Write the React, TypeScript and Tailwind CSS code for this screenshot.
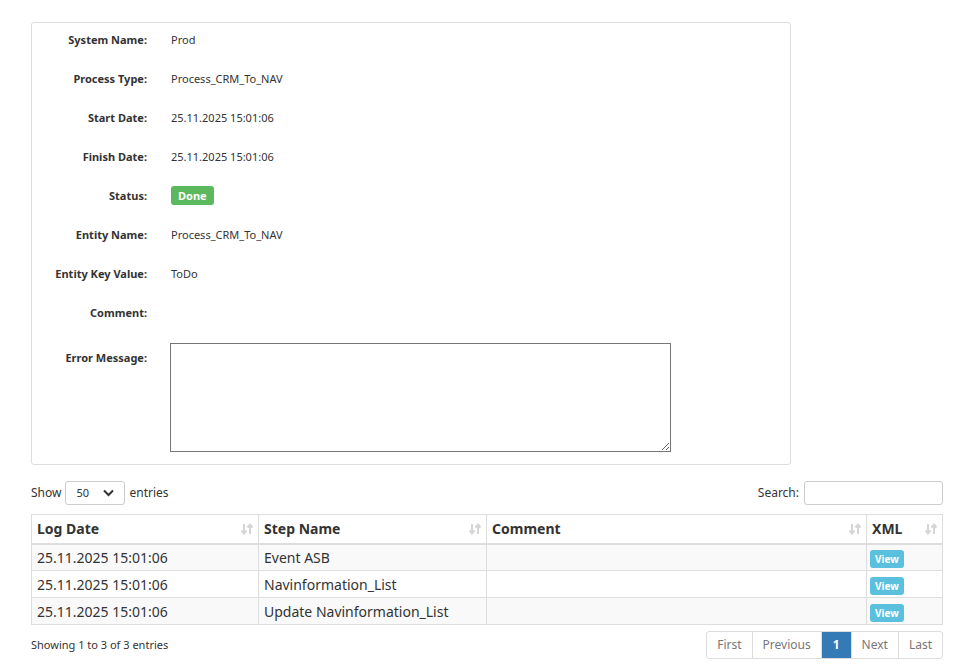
const fields: [string, React.ReactNode][] = [
  ["System Name:", "Prod"],
  ["Process Type:", "Process_CRM_To_NAV"],
  ["Start Date:", "25.11.2025 15:01:06"],
  ["Finish Date:", "25.11.2025 15:01:06"],
  ["Status:", <span className="rounded-[3px] bg-[#5cb85c] px-[7px] py-[2px] text-[11px] font-bold text-white">Done</span>],
  ["Entity Name:", "Process_CRM_To_NAV"],
  ["Entity Key Value:", "ToDo"],
  ["Comment:", ""],
];

const rows = [
  ["25.11.2025 15:01:06", "Event ASB"],
  ["25.11.2025 15:01:06", "Navinformation_List"],
  ["25.11.2025 15:01:06", "Update Navinformation_List"],
];

function SortIcon() {
  return (
    <svg width="12" height="12" viewBox="0 0 12 12" className="text-[#d6d6d6]">
      <path d="M3 1v9M0.5 7.5L3 10.5 5.5 7.5M9 11V2M6.5 4.5L9 1.5 11.5 4.5" stroke="currentColor" strokeWidth="2" fill="none" />
    </svg>
  );
}

export default function App() {
  return (
    <div className="min-h-[670px] w-[956px] bg-white text-[#333] font-['Liberation_Sans',Arial,sans-serif]">
      <div className="pl-[31px] pt-[22px] pr-[165px]">
        <div className="rounded-[3px] border border-[#ddd] pb-[12px] pt-[8px]">
          {fields.map(([l, v], i) => (
            <div key={i} className="flex h-[39px] items-start pt-[1px]">
              <div className="w-[115px] text-right text-[11px] font-bold">{l}</div>
              <div className="pl-[24px] text-[11px]">{v}</div>
            </div>
          ))}
          <div className="flex items-start">
            <div className="w-[115px] pt-[7px] text-right text-[11px] font-bold">Error Message:</div>
            <textarea className="ml-[23px] h-[109px] w-[501px] border border-[#767676]" />
          </div>
        </div>
      </div>
      <div className="px-[31px] pt-[16px] pr-[13px]">
        <div className="flex items-center justify-between text-[12px]">
          <div className="flex items-center gap-[4px]">
            Show
            <div className="flex h-[24px] w-[60px] items-center justify-between rounded-[3px] border border-[#ccc] px-[10px] text-[11px]">
              <span>50</span>
              <svg width="11" height="8" viewBox="0 0 11 8"><path d="M1 1.5l4.5 4.5L10 1.5" stroke="#333" strokeWidth="2" fill="none" /></svg>
            </div>
            entries
          </div>
          <div className="flex items-center gap-[5px]">
            Search:
            <div className="h-[24px] w-[139px] rounded-[3px] border border-[#ccc]" />
          </div>
        </div>
        <table className="mt-[9px] w-full border-collapse text-[14px]">
          <thead>
            <tr className="h-[29px] border-b-2 border-[#ddd] font-bold">
              {[["Log Date", 227], ["Step Name", 228], ["Comment", 380], ["XML", 76]].map(([h, w]) => (
                <th key={h} style={{ width: w as number }} className="border border-[#ddd] px-[5px] text-left">
                  <div className="flex items-center justify-between">{h}<SortIcon /></div>
                </th>
              ))}
            </tr>
          </thead>
          <tbody>
            {rows.map((r, i) => (
              <tr key={i} className={`h-[27px] ${i % 2 === 0 ? "bg-[#f9f9f9]" : "bg-white"}`}>
                <td className="border border-[#ddd] px-[5px]">{r[0]}</td>
                <td className="border border-[#ddd] px-[5px]">{r[1]}</td>
                <td className="border border-[#ddd]" />
                <td className="border border-[#ddd] px-[3px]">
                  <span className="rounded-[3px] bg-[#5bc0de] px-[5px] py-[2px] text-[10px] font-bold text-white">View</span>
                </td>
              </tr>
            ))}
          </tbody>
        </table>
        <div className="mt-[6px] flex items-center justify-between text-[11px]">
          <span>Showing 1 to 3 of 3 entries</span>
          <div className="flex text-[12px] text-[#777]">
            {["First", "Previous", "1", "Next", "Last"].map((p, i) => (
              <div key={p} className={`flex h-[28px] items-center border border-[#ddd] px-[10px] ${i > 0 ? "-ml-px" : "rounded-l-[3px]"} ${i === 4 ? "rounded-r-[3px]" : ""} ${p === "1" ? "border-[#337ab7] bg-[#337ab7] px-[11px] font-bold text-white" : ""}`}>{p}</div>
            ))}
          </div>
        </div>
      </div>
    </div>
  );
}
